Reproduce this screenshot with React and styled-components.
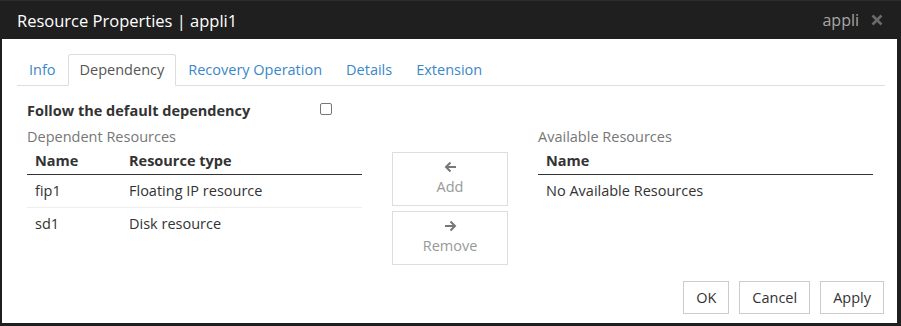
import React from "react"
import styled, { createGlobalStyle } from "styled-components"

const GlobalStyle = createGlobalStyle`
  html, body {
    margin: 0;
    padding: 0;
    background: #1f1f1f;
  }
  body {
    font-family: "Open Sans", "Noto Sans", sans-serif;
    font-size: 14.5px;
    color: #333;
  }
`

const tabs = ["Info", "Dependency", "Recovery Operation", "Details", "Extension"]

const dependents = [
  { name: "fip1", type: "Floating IP resource" },
  { name: "sd1", type: "Disk resource" },
]

const ArrowLeft = () => (
  <svg width="13" height="12" viewBox="0 0 13 12">
    <path d="M12 6H2.2M6.5 1.5L2 6l4.5 4.5" stroke="#777" strokeWidth="2" fill="none" />
  </svg>
)

const ArrowRight = () => (
  <svg width="13" height="12" viewBox="0 0 13 12">
    <path d="M1 6h9.8M6.5 1.5L11 6l-4.5 4.5" stroke="#777" strokeWidth="2" fill="none" />
  </svg>
)

const App = () => {
  return (
    <>
      <GlobalStyle />
      <Dialog>
        <Header>
          <Title>Resource Properties | appli1</Title>
          <HeaderRight>
            <Owner>appli</Owner>
            <Close>
              <svg width="12" height="12" viewBox="0 0 12 12">
                <path d="M1.5 1.5l9 9M10.5 1.5l-9 9" stroke="#6a6a6a" strokeWidth="2.6" />
              </svg>
            </Close>
          </HeaderRight>
        </Header>
        <Body>
          <Tabs>
            {tabs.map(t => (
              <Tab key={t} active={t === "Dependency"}>
                {t}
              </Tab>
            ))}
          </Tabs>
          <Pane>
            <FollowRow>
              <FollowLabel>Follow the default dependency</FollowLabel>
              <Check />
            </FollowRow>
            <Columns>
              <div>
                <Caption>Dependent Resources</Caption>
                <Table>
                  <colgroup>
                    <col width="94" />
                    <col />
                  </colgroup>
                  <thead>
                    <tr>
                      <Th>Name</Th>
                      <Th>Resource type</Th>
                    </tr>
                  </thead>
                  <tbody>
                    {dependents.map(r => (
                      <tr key={r.name}>
                        <Td>{r.name}</Td>
                        <Td>{r.type}</Td>
                      </tr>
                    ))}
                  </tbody>
                </Table>
              </div>
              <MoveButtons>
                <MoveButton>
                  <ArrowLeft />
                  <span>Add</span>
                </MoveButton>
                <MoveButton>
                  <ArrowRight />
                  <span>Remove</span>
                </MoveButton>
              </MoveButtons>
              <div>
                <Caption>Available Resources</Caption>
                <Table>
                  <thead>
                    <tr>
                      <Th>Name</Th>
                    </tr>
                  </thead>
                  <tbody>
                    <tr>
                      <Td>No Available Resources</Td>
                    </tr>
                  </tbody>
                </Table>
              </div>
            </Columns>
          </Pane>
          <Footer>
            <Button>OK</Button>
            <Button>Cancel</Button>
            <Button>Apply</Button>
          </Footer>
        </Body>
      </Dialog>
    </>
  )
}

const Dialog = styled.div`
  width: 901px;
  height: 326px;
  display: flex;
  flex-direction: column;
  box-sizing: border-box;
  border-top: 1px solid #2d2d2d;
`

const Header = styled.div`
  height: 38px;
  display: flex;
  align-items: center;
  justify-content: space-between;
  padding: 0 18px 0 17px;
  background: #1f1f1f;
`

const Title = styled.div`
  color: #fff;
  font-size: 16.5px;
`

const HeaderRight = styled.div`
  display: flex;
  align-items: center;
  gap: 12px;
`

const Owner = styled.span`
  color: #a8a8a8;
  font-size: 16px;
`

const Close = styled.span`
  display: flex;
`

const Body = styled.div`
  flex: 1;
  margin: 0 4px 3px 2px;
  background: #fff;
  padding: 15px 12px 0 15px;
  display: flex;
  flex-direction: column;
`

const Tabs = styled.div`
  display: flex;
  border-bottom: 1px solid #ddd;
  height: 31px;
`

const Tab = styled.div`
  padding: 0 11px;
  line-height: 30px;
  border: 1px solid ${p => (p.active ? "#ddd" : "transparent")};
  border-bottom: ${p => (p.active ? "1px solid #fff" : "none")};
  border-radius: 3px 3px 0 0;
  color: ${p => (p.active ? "#555" : "#3a87c8")};
  background: ${p => (p.active ? "#fff" : "transparent")};
  margin-bottom: ${p => (p.active ? "-1px" : "0")};
`

const Pane = styled.div`
  padding: 0 11px 0 10px;
`

const FollowRow = styled.div`
  display: flex;
  align-items: center;
  height: 28px;
  margin-top: 10px;
`

const FollowLabel = styled.span`
  font-weight: bold;
  width: 293px;
`

const Check = styled.span`
  width: 10px;
  height: 10px;
  border: 1px solid #767676;
  border-radius: 2px;
  margin-top: -2px;
`

const Columns = styled.div`
  display: grid;
  grid-template-columns: 335px 116px 335px;
  column-gap: 30px;
  margin-top: 3px;
`

const Caption = styled.div`
  color: #777;
  line-height: 20px;
`

const Table = styled.table`
  width: 100%;
  border-collapse: collapse;
  table-layout: fixed;
`

const Th = styled.th`
  text-align: left;
  font-weight: bold;
  padding: 5px 8px 4px;
  line-height: 18px;
  border-bottom: 1px solid #333;
`

const Td = styled.td`
  padding: 6px 8px 7px;
  line-height: 19px;
  border-bottom: 1px solid #eee;
  tr:last-child > & {
    border-bottom: none;
  }
`

const MoveButtons = styled.div`
  display: flex;
  flex-direction: column;
  gap: 5px;
  padding-top: 25px;
`

const MoveButton = styled.div`
  box-sizing: border-box;
  height: 54px;
  border: 1px solid #ddd;
  display: flex;
  flex-direction: column;
  align-items: center;
  justify-content: center;
  gap: 4px;
  color: #999;
  span {
    line-height: 20px;
  }
`

const Footer = styled.div`
  margin-top: auto;
  display: flex;
  justify-content: flex-end;
  gap: 10px;
  padding: 0 1px 9px 0;
`

const Button = styled.div`
  height: 31px;
  padding: 0 12px;
  border: 1px solid #ccc;
  display: flex;
  align-items: center;
  color: #333;
`

export default App
